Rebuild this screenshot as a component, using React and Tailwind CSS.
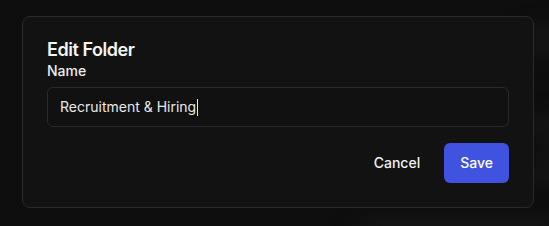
export default function App() {
  return (
    <div
      className="min-h-[226px] w-full bg-[#0e0e0e] relative overflow-hidden"
      style={{ fontFamily: "Inter, 'Noto Sans', sans-serif" }}
    >
      <div className="absolute right-[-20px] top-[30px] h-[20px] w-[40px] rounded-full bg-[#1a1a1a] blur-md" />
      <div className="absolute right-[-20px] top-[120px] h-[20px] w-[40px] rounded-full bg-[#181818] blur-md" />
      <div className="absolute right-[-20px] top-[160px] h-[20px] w-[40px] rounded-full bg-[#181818] blur-md" />
      <div className="absolute left-[360px] bottom-[-14px] h-[20px] w-[200px] rounded-full bg-[#171717] blur-md" />
      <div className="relative pt-4 pl-[22px]">
        <div className="w-[512px] rounded-lg border border-[#2a2a2a] bg-[#121212] p-6 flex flex-col">
          <h2 className="text-[18px] font-semibold leading-none tracking-tight text-[#f4f4f5]">
            Edit Folder
          </h2>
          <label className="mt-[5px] text-sm font-medium leading-none text-[#ececec]">
            Name
          </label>
          <div className="mt-[9px] h-10 rounded-md border border-[#2a2a2a] bg-[#111111] px-3 flex items-center text-sm text-[#e8e8e8]">
            <span>Recruitment &amp; Hiring</span>
            <span className="ml-px inline-block h-[17px] w-px bg-[#e8e8e8]" />
          </div>
          <div className="mt-4 flex justify-end gap-2">
            <button className="h-10 px-4 rounded-md text-sm font-medium text-[#f0f0f0]">
              Cancel
            </button>
            <button className="h-10 px-4 rounded-md text-sm font-medium text-white bg-[#3f52e0]">
              Save
            </button>
          </div>
        </div>
      </div>
    </div>
  );
}
